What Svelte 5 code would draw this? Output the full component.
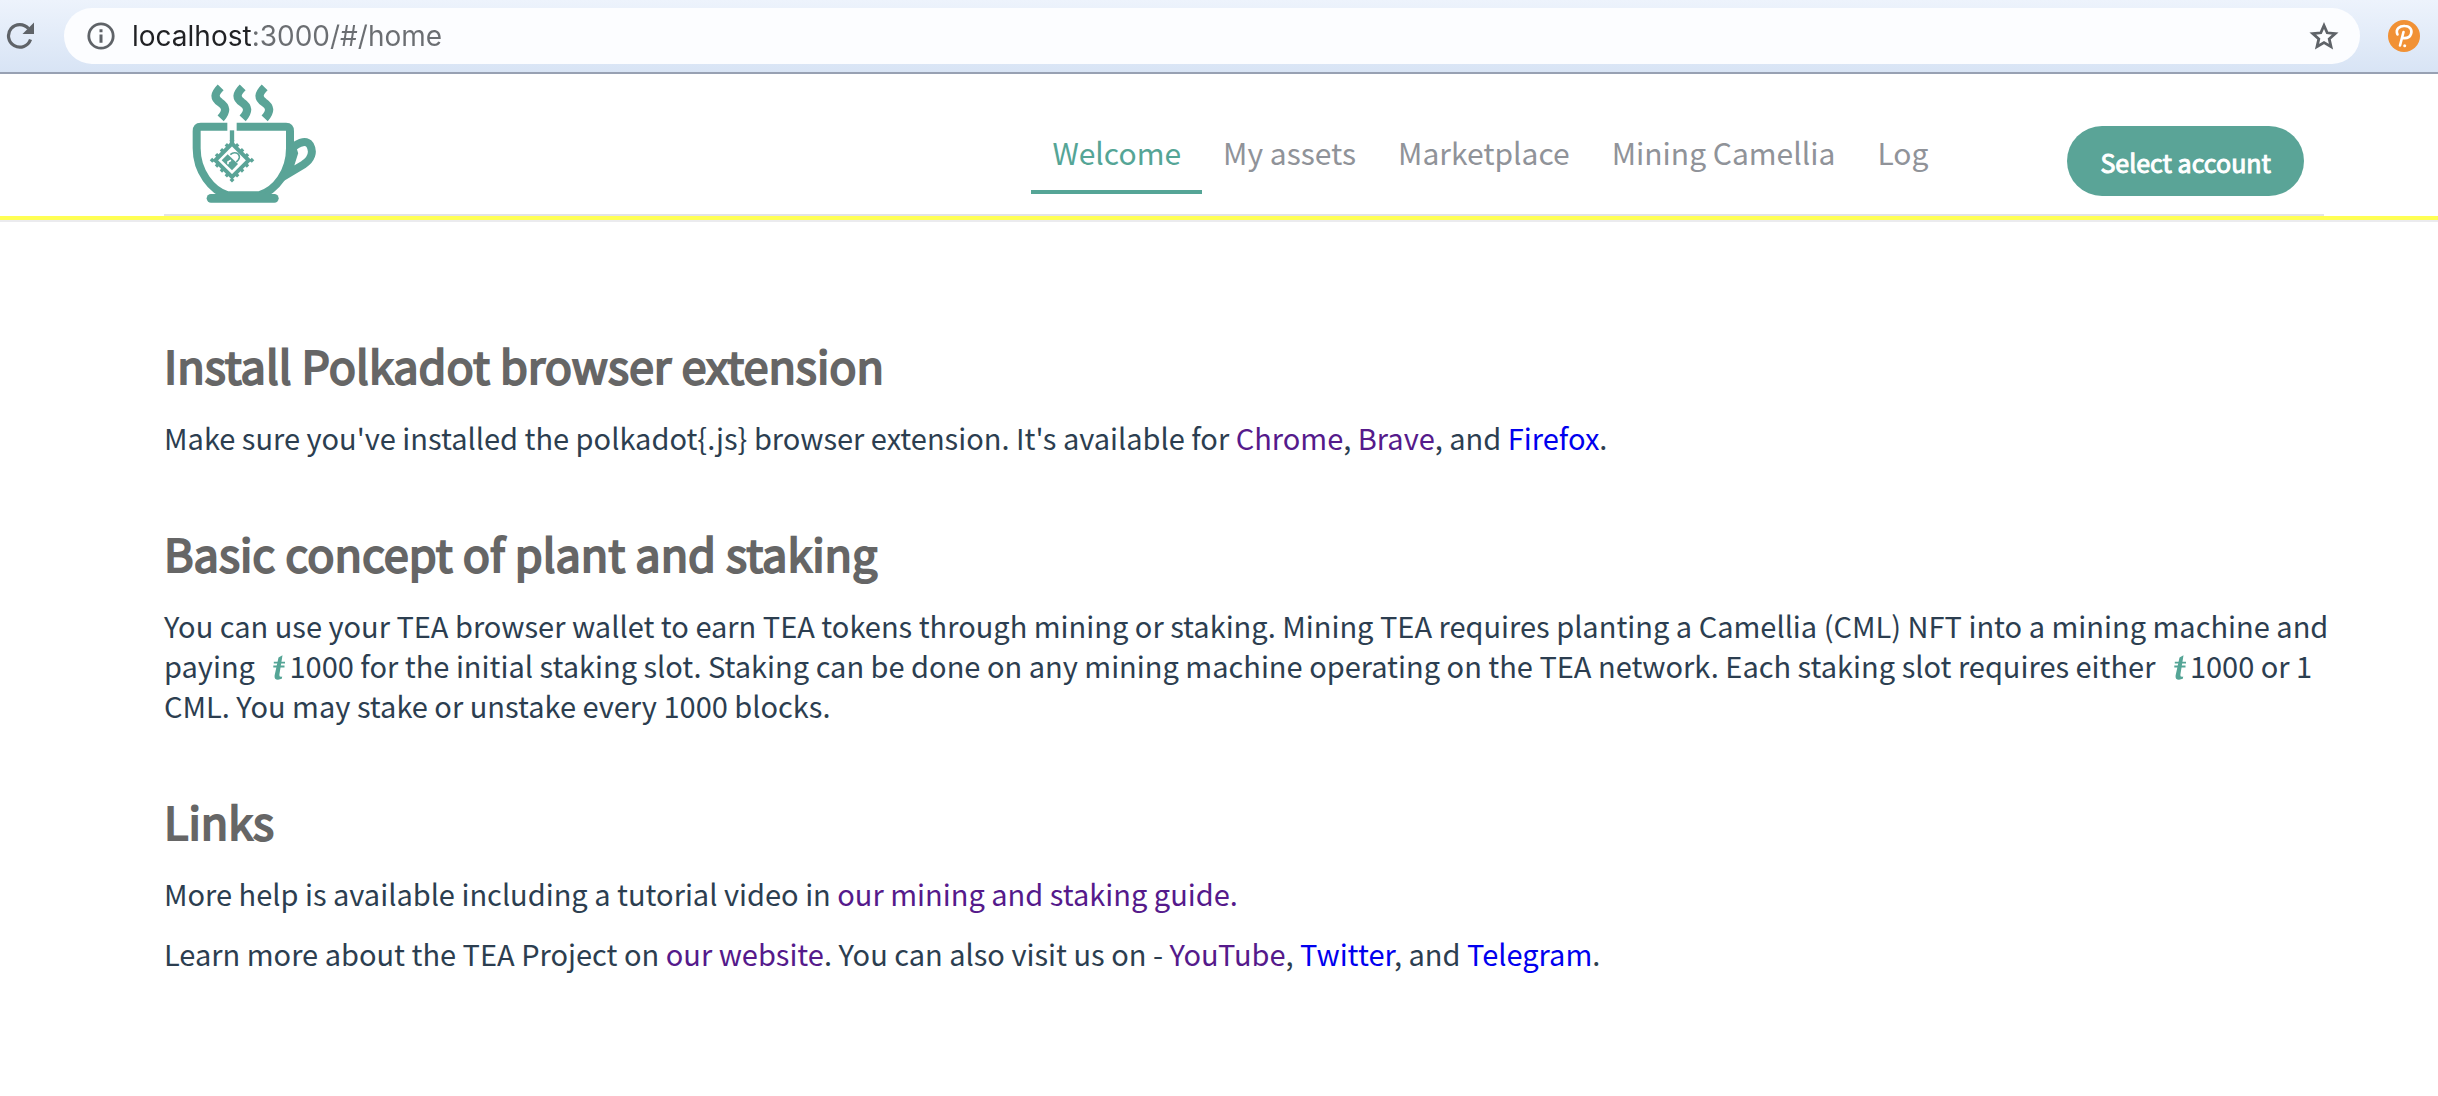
<script>
  const tabs = ['Welcome', 'My assets', 'Marketplace', 'Mining Camellia', 'Log'];
  let active = $state('Welcome');
</script>

{#snippet tea()}
  <svg class="tea" viewBox="0 0 12 25" aria-label="TEA" role="img">
    <path d="M9.500 .3L5.500 2.500L1.600 20.500Q1 24.700 5 24.700L8.800 23.800L9.200 21.500Q5.800 22.300 6.400 19.500Z" fill="currentColor" />
    <path d="M.8 7.600H12M.3 11.500H11.500" stroke="currentColor" stroke-width="1.800" />
  </svg>
{/snippet}

<div class="browser">
  <button class="icon reload" aria-label="Reload">
    <svg viewBox="0 0 28 28"><path d="M24.500 17.500A11.300 11.300 0 1 1 22.500 6.600" fill="none" stroke="currentColor" stroke-width="3.200" /><path d="M28 .5V12H16.500Z" fill="currentColor" /></svg>
  </button>
  <div class="address">
    <button class="icon info" aria-label="Site information">
      <svg viewBox="0 0 28 28"><circle cx="14" cy="14" r="12.200" fill="none" stroke="currentColor" stroke-width="2.800" /><path d="M14 7.300V10.300M14 12.500V20.700" stroke="currentColor" stroke-width="3" /></svg>
    </button>
    <input aria-label="Address" value="localhost:3000/#/home" />
    <button class="icon star" aria-label="Bookmark this page">
      <svg viewBox="0 0 30 28"><path d="M15 3.500 L18.200 10.800 L26.200 11.600 L20.200 16.900 L22 24.700 L15 20.600 L8 24.700 L9.800 16.900 L3.800 11.600 L11.800 10.800Z" fill="none" stroke="currentColor" stroke-width="2.800" /></svg>
    </button>
  </div>
  <button class="icon ext" aria-label="Polkadot extension">
    <svg viewBox="0 0 32 32"><circle cx="16" cy="16" r="16" fill="#f19135" /><path d="M9.500 14.500C7 9 12 5.500 17 6C22 6 24.500 10 23 14C21.800 17.500 18 18.500 14.500 18M15.500 12L12 25.500" fill="none" stroke="#fff" stroke-width="2.600" stroke-linecap="round" /><circle cx="16.700" cy="25.700" r="1.500" fill="#fff" /></svg>
  </button>
</div>

<header>
  <div class="inner bar">
    <a class="logo" href="#/home" aria-label="TEA Project home">
      <svg viewBox="126 42 372 357" fill="none" stroke="#5aa497">
        <path d="M212 52 C192 72 192 84 210 97 C229 110 231 124 212 145M278 52 C258 72 258 84 276 97 C295 110 297 124 278 145M344 52 C324 72 324 84 342 97 C361 110 363 124 344 145" stroke-width="25" />
        <path d="M232 170H152Q140 170 140 184V235C140 305 185 362 233 376H327C378 362 420 305 420 235V184Q420 170 408 170H260" stroke-width="24" />
        <path d="M205 362Q279 380 355 362L330 384H230Z" fill="#5aa497" stroke="none" />
        <path d="M183 385H373" stroke-width="26" stroke-linecap="round" />
        <path d="M426 234C450 214 470 211 480 225C492 246 484 268 460 284L395 323M425 227L432 250L416 300" stroke-width="24" />
        <path d="M246 181V222" stroke-width="13" />
        <path d="M246 221L296 271L246 321L196 271Z" stroke-width="12" />
        <path d="M246 212L305 271L246 330L187 271Z" stroke-width="11" stroke-dasharray="10 10.860" stroke-dashoffset="5" />
        <path d="M215 271L233 253L264 282L246 301Z" fill="#5aa497" stroke="none" />
        <path d="M241 254C252 243 269 249 268 263Q267 270 259 276" stroke-width="5" />
        <path d="M234 283V276L243 271" stroke="#fff" stroke-width="5" />
      </svg>
    </a>
    <nav>
      {#each tabs as tab}
        <a href="#/{tab}" class:active={active === tab} onclick={() => (active = tab)}>{tab}</a>
      {/each}
    </nav>
    <button class="account">Select account</button>
  </div>
</header>

<main>
  <section>
    <h2>Install Polkadot browser extension</h2>
    <p>Make sure you've installed the polkadot&#123;.js&#125; browser extension. It's available for <a class="seen" href="#chrome">Chrome</a>, <a class="seen" href="#brave">Brave</a>, and <a href="#firefox">Firefox</a>.</p>
  </section>
  <section>
    <h2>Basic concept of plant and staking</h2>
    <p>You can use your TEA browser wallet to earn TEA tokens through mining or staking. Mining TEA requires planting a Camellia (CML) NFT into a mining machine and paying {@render tea()}1000 for the initial staking slot. Staking can be done on any mining machine operating on the TEA network. Each staking slot requires either {@render tea()}1000 or 1 CML. You may stake or unstake every 1000 blocks.</p>
  </section>
  <section>
    <h2>Links</h2>
    <p>More help is available including a tutorial video in <a class="seen" href="#guide">our mining and staking guide.</a></p>
    <p>Learn more about the TEA Project on <a class="seen" href="#website">our website</a>. You can also visit us on - <a class="seen" href="#youtube">YouTube</a>, <a href="#twitter">Twitter</a>, and <a href="#telegram">Telegram</a>.</p>
  </section>
</main>

<style>
  :global(body) {
    margin: 0;
    background: #fff;
    color: #2c3e50;
    font-family: 'Noto Sans CJK SC', sans-serif;
    font-size: 29px;
    line-height: 40px;
  }
  button {
    border: 0;
    padding: 0;
    background: none;
    font: inherit;
    cursor: pointer;
  }
  a {
    color: #0000ee;
    text-decoration: none;
  }
  a.seen {
    color: #551a8b;
  }
  svg {
    display: block;
    width: 100%;
  }
  .browser {
    display: flex;
    align-items: center;
    height: 72px;
    padding: 0 18px 0 6px;
    border-bottom: 2px solid #98a1b3;
    background: linear-gradient(#edf3fc, #d8e4f5);
  }
  .icon {
    flex: none;
    width: 28px;
    color: #5f6368;
  }
  .address {
    flex: 1;
    display: flex;
    align-items: center;
    height: 56px;
    margin: 0 28px 0 30px;
    padding: 0 21px 0 23px;
    border-radius: 28px;
    background: #fcfdff;
  }
  .star {
    width: 30px;
  }
  .ext {
    width: 32px;
  }
  input {
    flex: 1;
    min-width: 0;
    height: 40px;
    margin: 0 16px 0 17px;
    padding: 0;
    border: 0;
    outline: 0;
    font: 28px/40px Inter, sans-serif;
    background: linear-gradient(90deg, #202124 119px, #6b6e72 119px);
    -webkit-background-clip: text;
    background-clip: text;
    color: transparent;
  }
  header {
    border-bottom: 4px solid #ffff54;
    box-shadow: 0 2px #ebebee;
  }
  .inner {
    margin: 0 114px 0 164px;
  }
  .bar {
    display: flex;
    align-items: flex-start;
    height: 140px;
    border-bottom: 2px solid #e4e4e4;
  }
  .logo {
    width: 124px;
    margin: 10px auto 0 28px;
  }
  nav {
    display: flex;
    margin: 42px 118px 0 0;
  }
  nav a {
    padding: 16px 21px 18px;
    border-bottom: 4px solid transparent;
    color: #909399;
    font-size: 30px;
  }
  nav a.active {
    color: #55a596;
    border-color: #55a596;
  }
  .account {
    margin: 52px 20px 0 0;
    padding: 16px 33px 14px;
    border-radius: 35px;
    background: #5aa497;
    color: #fff;
    font-size: 25px;
    -webkit-text-stroke: 1px #fff;
  }
  main {
    padding: 111px 106px 0 164px;
  }
  section {
    margin-bottom: 62px;
  }
  h2 {
    margin: 0 0 18px;
    color: #666;
    font-size: 45px;
    line-height: 68px;
    font-weight: 400;
    -webkit-text-stroke: 2px #666;
  }
  p {
    margin: 0 0 20px;
  }
  .tea {
    display: inline-block;
    width: 12px;
    height: 25px;
    margin: 0 4px 0 12px;
    vertical-align: -2px;
    color: #55a596;
  }
</style>
